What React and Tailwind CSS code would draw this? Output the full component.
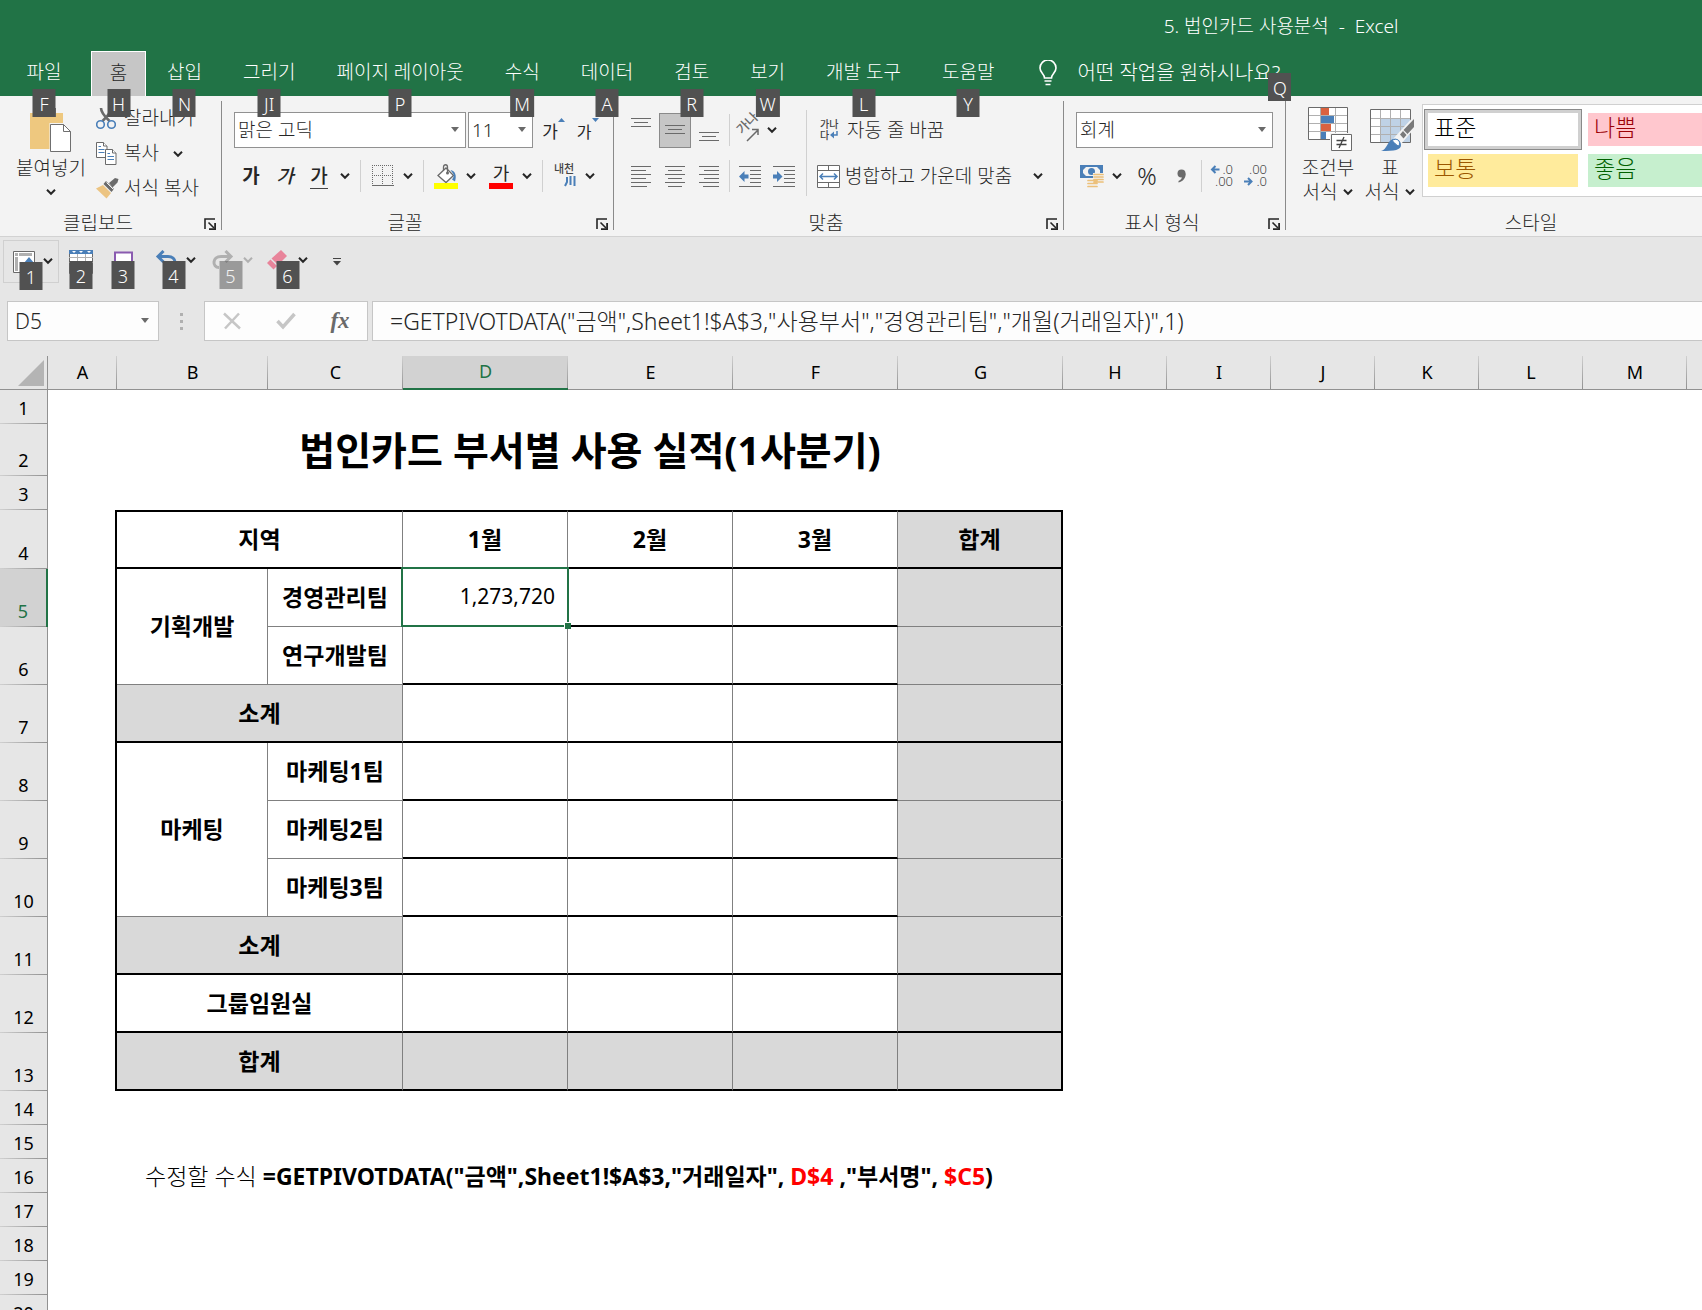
import { useState } from "react";
import clsx from "clsx";

// ── Data ───────────────────────────────────────────────────────────────────

const TABS = [
  { label: "홈", keyTip: "H", active: true },
  { label: "삽입", keyTip: "N" },
  { label: "그리기", keyTip: "JI" },
  { label: "페이지 레이아웃", keyTip: "P" },
  { label: "수식", keyTip: "M" },
  { label: "데이터", keyTip: "A" },
  { label: "검토", keyTip: "R" },
  { label: "보기", keyTip: "W" },
  { label: "개발 도구", keyTip: "L" },
  { label: "도움말", keyTip: "Y" },
];

const COLUMNS = [
  { name: "A", width: "w-[69px]" },
  { name: "B", width: "w-[151px]" },
  { name: "C", width: "w-[135px]" },
  { name: "D", width: "w-[165px]", active: true },
  { name: "E", width: "w-[165px]" },
  { name: "F", width: "w-[165px]" },
  { name: "G", width: "w-[165px]" },
  { name: "H", width: "w-[104px]" },
  { name: "I", width: "w-[104px]" },
  { name: "J", width: "w-[104px]" },
  { name: "K", width: "w-[104px]" },
  { name: "L", width: "w-[104px]" },
  { name: "M", width: "w-[104px]" },
];

// labels: cells to the left of the month columns; line: weight of the rule below
const REPORT_ROWS = [
  {
    row: 5,
    labels: [
      { text: "기획개발", rowSpan: 2, line: "thin" },
      { text: "경영관리팀", line: "thin" },
    ],
    values: ["1,273,720", "", ""],
    selected: 0,
    totalLine: "thin",
  },
  { row: 6, labels: [{ text: "연구개발팀", line: "thin" }], values: ["", "", ""], totalLine: "thin" },
  { row: 7, labels: [{ text: "소계", colSpan: 2, line: "thick", shaded: true }], values: ["", "", ""], totalLine: "thick" },
  {
    row: 8,
    labels: [
      { text: "마케팅", rowSpan: 3, line: "thin" },
      { text: "마케팅1팀", line: "thin" },
    ],
    values: ["", "", ""],
    totalLine: "thin",
  },
  { row: 9, labels: [{ text: "마케팅2팀", line: "thin" }], values: ["", "", ""], totalLine: "thin" },
  { row: 10, labels: [{ text: "마케팅3팀", line: "thin" }], values: ["", "", ""], totalLine: "thin" },
  { row: 11, labels: [{ text: "소계", colSpan: 2, line: "thick", shaded: true }], values: ["", "", ""], totalLine: "thick" },
  { row: 12, labels: [{ text: "그룹임원실", colSpan: 2, line: "thick" }], values: ["", "", ""], totalLine: "thick" },
  { row: 13, labels: [{ text: "합계", colSpan: 2, line: "thick", shaded: true }], values: ["", "", ""], shaded: true, totalLine: "thick" },
];

// ── Small parts ────────────────────────────────────────────────────────────

function KeyTip({ children, className }) {
  return (
    <span
      className={clsx(
        "absolute z-10 h-7 min-w-[23px] px-1 pt-0.5 flex items-center justify-center",
        "bg-[#515151] text-white text-[18px] leading-6",
        className
      )}
    >
      {children}
    </span>
  );
}

function Chevron({ className }) {
  return (
    <svg className={clsx("shrink-0", className)} width="10" height="8" viewBox="0 0 10 8" fill="none" stroke="currentColor" strokeWidth="2">
      <path d="M1 1.8 5 5.8 9 1.8" />
    </svg>
  );
}

function ChevronButton({ label }) {
  return (
    <button type="button" aria-label={label} className="w-[18px] h-8 flex items-center justify-center text-[#262626]">
      <Chevron />
    </button>
  );
}

function IconButton({ label, className, children }) {
  return (
    <button type="button" aria-label={label} className={clsx("shrink-0 h-8 flex items-center justify-center", className)}>
      {children}
    </button>
  );
}

function Separator({ className }) {
  return <div className={clsx("w-px bg-[#d0d0d0] shrink-0", className)} />;
}

function Dropdown({ label, value, className }) {
  return (
    <div className={clsx("relative shrink-0", className)}>
      <select
        aria-label={label}
        defaultValue={value}
        className="w-full h-9 appearance-none border border-[#919191] bg-white pl-[3px] text-[19px] text-[#262626]"
      >
        <option>{value}</option>
      </select>
      <svg className="absolute right-[7px] top-[15px] pointer-events-none" width="8" height="5" viewBox="0 0 8 5">
        <path d="M0 0h8L4 5z" fill="#6a6a6a" />
      </svg>
    </div>
  );
}

function Group({ title, launcher = true, className, children }) {
  return (
    <section aria-label={title} className={clsx("flex flex-col h-[140px]", className)}>
      <div className="flex-1">{children}</div>
      <div className="flex items-center h-[30px]">
        <div className="flex-1 pt-1 text-center leading-6">{title}</div>
        {launcher && (
          <button type="button" aria-label={`${title} 설정`} className="w-[25px] pl-2 pt-1.5">
            <svg width="12" height="12" viewBox="0 0 12 12" fill="none" stroke="#262626">
              <path d="M1 11V1h10" strokeWidth="1.6" />
              <path d="M4.5 4.5 10 10" strokeWidth="1.6" />
              <path d="M11.2 5v6.2H5" strokeWidth="2" />
            </svg>
          </button>
        )}
      </div>
    </section>
  );
}

function GroupDivider() {
  return <div className="w-px h-[129px] mt-[5px] bg-[#8a8a8a] shrink-0" />;
}

// ── Icons ──────────────────────────────────────────────────────────────────

function PasteIcon() {
  return (
    <svg width="42" height="48" viewBox="0 0 42 48">
      <path d="M0 9h33v36H0z" fill="#eec87f" />
      <path d="M8 4h18v9H8z" fill="#6f6f6f" />
      <path d="M19.5 19h15l7.5 7.5V48h-22.5z" fill="#f3f3f3" />
      <path d="M20.5 20.5h13l7 7v20h-20z" fill="#fff" stroke="#6f6f6f" />
      <path d="M33.5 20.5v7h7" fill="none" stroke="#6f6f6f" />
    </svg>
  );
}

function CutIcon() {
  return (
    <svg width="20" height="23" viewBox="0 0 20 23" fill="none">
      <path d="M5 1c0 4 2 7 8.5 13M15 1c0 4-2 7-8.5 13" stroke="#6a6a6a" strokeWidth="2.6" />
      <circle cx="4.5" cy="17.5" r="3.8" stroke="#4a7fb8" strokeWidth="1.6" />
      <circle cx="15.5" cy="17.5" r="3.8" stroke="#4a7fb8" strokeWidth="1.6" />
    </svg>
  );
}

function CopyIcon() {
  return (
    <svg width="21" height="23" viewBox="0 0 21 23" fill="#fff" stroke="#6a6a6a">
      <path d="M.5.5h7l3.5 3.5v11.5H.5z" />
      <path d="M7.5.5V4H11" />
      <path d="M2.5 4.5H5M2.5 7.5h6M2.5 10.5h6" stroke="#4a7fb8" />
      <path d="M9.5 7.5h7l3.5 3.5v11.5H9.5z" />
      <path d="M16.5 7.5V11H20" />
      <path d="M11.5 11.5H14M11.5 14.5h6.5M11.5 17.5h6.5" stroke="#4a7fb8" />
    </svg>
  );
}

function FormatPainterIcon() {
  return (
    <svg width="23" height="21" viewBox="0 0 23 21">
      <path d="M0 10.500 7 7l8 8-4.500 5.500z" fill="#ecc482" />
      <path d="m7.500 6 2.500-3 8 8-2.500 3z" fill="#6a6a6a" />
      <path d="m13 5 6-5 3.500 1-1 3.500-5 5z" fill="#6a6a6a" />
      <path d="m10.500 4.500 7 7" stroke="#f3f3f3" strokeWidth="1" />
    </svg>
  );
}

function BordersIcon() {
  return (
    <svg width="22" height="22" viewBox="0 0 22 22" fill="none" stroke="#6a6a6a">
      <path d="M0 .5h22M0 10.5h22M.5 0v20M10.5 0v20M20.5 0v20" strokeDasharray="1 1" />
      <path d="M0 20.5h22" />
    </svg>
  );
}

function FillIcon() {
  return (
    <svg width="24" height="25" viewBox="0 0 24 25" fill="none">
      <path d="M4 11.5 12 4l7.5 7.5-7.5 7z" fill="#fff" stroke="#6a6a6a" strokeWidth="1.3" />
      <path d="M9.5 6.5V3c0-3 4-3 4 0v6" stroke="#6a6a6a" strokeWidth="1.3" />
      <circle cx="13.5" cy="9" r="1.5" fill="#6a6a6a" />
      <path d="M16.5 6c4.500 1 6.500 5 4.500 11.500l-3-2c1.500-2 2.500-4 1-6z" fill="#4a7fb8" />
      <path d="M0 19h24v6H0z" fill="#ff0" />
    </svg>
  );
}

// each entry is one rule: [x, length], drawn top to bottom
function LinesIcon({ lines, gap = 4, top = 0, height = 21 }) {
  return (
    <svg width="20" height={height} viewBox={`0 0 20 ${height}`} stroke="#6a6a6a">
      {lines.map(([x, len], i) => (
        <path key={i} d={`M${x} ${top + i * gap + 0.5}h${len}`} />
      ))}
    </svg>
  );
}

const SHORT_LINES = [[0, 20], [3, 14], [0, 20]];
const LEFT_LINES = [[0, 20], [0, 15], [0, 20], [0, 15], [0, 20], [0, 16]];
const CENTER_LINES = [[0, 20], [3, 14], [0, 20], [3, 14], [0, 20], [3, 14]];
const RIGHT_LINES = [[0, 20], [5, 15], [0, 20], [5, 15], [0, 20], [4, 16]];

function IndentIcon({ flip }) {
  return (
    <svg width="23" height="21" viewBox="0 0 23 21" stroke="#6a6a6a">
      <path d="M0 .5h22M11 4.5h11M11 8.5h11M11 12.5h11M11 16.5h11M0 20.5h22" />
      <path
        d={flip ? "M9.500 10.500 4 5v3.500H0v4h4V16z" : "M0 10.500 5.500 5v3.500h4v4h-4V16z"}
        fill="#4a7fb8"
        stroke="none"
      />
    </svg>
  );
}

function OrientationIcon() {
  return (
    <svg className="overflow-visible" width="24" height="24" viewBox="0 0 24 24" fill="none" stroke="#6a6a6a">
      <text x="0" y="0" transform="translate(6 17) rotate(-45)" fontSize="13" fontWeight="500" fill="#6a6a6a" stroke="none">가나</text>
      <path d="m11 23 11-11M22 17v-5.500h-6" strokeWidth="1.500" />
    </svg>
  );
}

function WrapIcon() {
  return (
    <svg className="overflow-visible" width="19" height="20" viewBox="0 0 19 20">
      <text x="0" y="8" fontSize="10" fontWeight="500" fill="#444">가나</text>
      <text x="0" y="19" fontSize="10" fontWeight="500" fill="#444">다</text>
      <path d="M17 11v4h-5" fill="none" stroke="#4a7fb8" strokeWidth="1.500" />
      <path d="M14 11.500v7L10 15z" fill="#4a7fb8" />
    </svg>
  );
}

function MergeIcon() {
  return (
    <svg width="23" height="23" viewBox="0 0 23 23" fill="#fff" stroke="#6a6a6a">
      <path d="M.5.5h22v22H.5z" />
      <path d="M0 5.5h23M0 17.5h23M11.5 0v5.5M11.5 17.5V23" />
      <path d="M3 11.5h17M6 8.5l-3 3 3 3M17 8.5l3 3-3 3" fill="none" stroke="#4a7fb8" strokeWidth="1.5" />
    </svg>
  );
}

function MoneyIcon() {
  return (
    <svg width="24" height="23" viewBox="0 0 24 23">
      <path d="M0 0h23v13H0z" fill="#4a7fb8" />
      <path d="M3 2h17v9H3z" fill="#f3f3f3" />
      <path d="M3 2h3L3 5zM20 2h-3l3 3zM3 11V8l3 3z" fill="#4a7fb8" />
      <circle cx="11.5" cy="6.5" r="3.5" fill="#4a7fb8" />
      <path d="M13 8h11v11H13zM7 14h11v9H7z" fill="#f3f3f3" />
      <path d="M14 9.5h9M14 12h9M14 14.5h9M14 17h9M8 15.5h9M8 18.500h9M8 21.500h9" stroke="#ecc07a" strokeWidth="1.700" strokeLinecap="round" />
    </svg>
  );
}

function DecimalIcon({ increase }) {
  return (
    <svg className="overflow-visible" width="24" height="24" viewBox="0 0 24 24">
      <text x="23" y="10" fontSize="13" textAnchor="end" fill="#444">{increase ? ".0" : ".00"}</text>
      <text x="23" y="22" fontSize="13" textAnchor="end" fill="#444">{increase ? ".00" : ".0"}</text>
      <path
        d={increase ? "M9.500 5.500H2M5.500 2 2 5.500 5.500 9" : "M0 17.500h7.500M4 14l3.500 3.500L4 21"}
        fill="none"
        stroke="#4a7fb8"
        strokeWidth="2"
      />
    </svg>
  );
}

function ConditionalIcon() {
  return (
    <svg className="ml-1" width="45" height="45" viewBox="0 0 45 45">
      <path d="M.5.5h39v32H.5z" fill="#fff" />
      <path d="M13 1h8v7h-8zM13 17h10v7H13z" fill="#d9623f" />
      <path d="M13 9h13v7H13zM13 25h5v7h-5z" fill="#4a7fb8" />
      <path d="M1 8.5h38M1 16.5h38M1 24.5h38M12.5 1v31M27.5 1v31" stroke="#b0b0b0" />
      <path d="M.5.5h39v32H.5z" fill="none" stroke="#6a6a6a" />
      <path d="M22 26h23v19H22z" fill="#f3f3f3" />
      <path d="M23.5 27.5h20v16h-20z" fill="#fff" stroke="#6a6a6a" />
      <path d="M28.5 33.5h10M28.5 37.5h10M36 30l-5 11" fill="none" stroke="#444" strokeWidth="1.3" />
    </svg>
  );
}

function TableStyleIcon() {
  return (
    <svg className="ml-1" width="45" height="45" viewBox="0 0 45 45">
      <path d="M.5 2.5h40v33H.5z" fill="#fff" />
      <path d="M11 11h29v24H11z" fill="#bfd2e6" />
      <path d="M1 11.5h39M1 19.5h39M1 27.5h39M10.5 3v32M20.5 3v32M30.5 3v32" stroke="#b0b0b0" />
      <path d="M.5 2.5h40v33H.5z" fill="none" stroke="#6a6a6a" />
      <path d="M44 9v13L31 37l-8-5z" fill="#f3f3f3" />
      <path d="M44 12v8l-6.500 7-4-4zM36.500 28l-3 3.500-3.500-4 3-3.500z" fill="#7a7a7a" />
      <path d="M11 44c6-1 6-10 12-12 4-1 8 2 8 6 0 5-6 6-20 6z" fill="#4a7fb8" />
      <path d="M22 33.500c5-3 9 0 7 5.500-3-.500-4-3-7-5.500z" fill="#fff" stroke="#4a7fb8" />
    </svg>
  );
}

function PivotIcon() {
  return (
    <svg width="22" height="22" viewBox="0 0 22 22">
      <path d="M.5.5h21v21H.5z" fill="#fff" stroke="#6a6a6a" />
      <path d="M2 2h3v3H2zM6 2h13v3H6zM2 6h3v14H2z" fill="#b0b0b0" />
      <path d="m11 12 5-6 5 6h-3v8h-4v-8z" fill="#4a7fb8" />
    </svg>
  );
}

function SheetTableIcon() {
  return (
    <svg width="24" height="24" viewBox="0 0 24 24">
      <path d="M.5.5h23v23H.5z" fill="#fff" stroke="#6a6a6a" />
      <path d="M0 7.5h24M0 12.5h24M8.5 4v20M16.5 4v20" stroke="#b0b0b0" />
      <path d="M0 0h24v4H0z" fill="#4a7fb8" />
      <path d="M3 1h4L5 3zM10 1h4l-2 2zM18 1h4l-2 2z" fill="#fff" />
    </svg>
  );
}

function UndoIcon({ redo }) {
  return (
    <svg
      className={clsx(redo ? "-scale-x-100 text-[#b0b0b0]" : "text-[#4a7fb8]")}
      width="22"
      height="20"
      viewBox="0 0 22 20"
      fill="none"
      stroke="currentColor"
    >
      <path d="M3 6.500h10c9 0 9 11 2 11" strokeWidth="3" />
      <path d="M8.500 1 3 6.500 8.500 12" strokeWidth="3" />
    </svg>
  );
}

function EraserIcon() {
  return (
    <svg width="21" height="20" viewBox="0 0 21 20">
      <path d="M14 0l6 6-9 9-6.500-6.500z" fill="#e8849a" />
      <path d="m3.500 9.500 6.500 6.500-3.500 3.500L0 13z" fill="#e8849a" />
    </svg>
  );
}

// ── Title bar and tabs ─────────────────────────────────────────────────────

function TitleBar() {
  return (
    <header className="bg-[#217346] text-white text-[19px] font-light">
      <div className="h-[51px] pt-0.5 flex items-center justify-center pl-[860px] whitespace-pre">
        <h1>5. 법인카드 사용분석  -  Excel</h1>
      </div>
      <nav className="flex gap-px h-[45px] whitespace-nowrap">
        <button type="button" className="relative w-[88px] shrink-0 pb-0.5">
          파일
          <KeyTip className="left-1/2 -translate-x-1/2 top-[38px]">F</KeyTip>
        </button>
        {TABS.map((tab) => (
          <button
            key={tab.label}
            type="button"
            className={clsx(
              "relative shrink-0 pb-0.5",
              tab.active ? "ml-0.5 w-[55px] bg-[#c6c6c6] text-[#262626] border border-b-0 border-white" : "px-5"
            )}
          >
            {tab.label}
            <KeyTip className={clsx("left-1/2 -translate-x-1/2", tab.active ? "top-[37px]" : "top-[38px]")}>{tab.keyTip}</KeyTip>
          </button>
        ))}
        <button type="button" className="relative ml-6 flex shrink-0 items-center gap-5 pb-0.5 text-[20px]">
          <svg width="18" height="26" viewBox="0 0 18 26" fill="none" stroke="#fff" strokeWidth="1.6">
            <path d="M5.500 18c0-4-4.500-5-4.500-10a8 8 0 0 1 16 0c0 5-4.500 6-4.500 10z" />
            <path d="M5.500 21h7M6.500 24.500h5" />
          </svg>
          어떤 작업을 원하시나요?
          <KeyTip className="-right-[11px] top-[22px]">Q</KeyTip>
        </button>
      </nav>
    </header>
  );
}

// ── Ribbon ─────────────────────────────────────────────────────────────────

function ClipboardGroup() {
  return (
    <Group title="클립보드" className="w-[221px] shrink-0">
      <div className="flex pl-3">
        <button type="button" className="w-[78px] pt-2 flex flex-col items-center">
          <PasteIcon />
          <span className="leading-8">붙여넣기</span>
          <Chevron className="mt-1" />
        </button>
        <div className="pt-[5px] pl-1.5">
          <button type="button" className="flex items-center gap-1 h-[35px]">
            <span className="w-6"><CutIcon /></span>
            잘라내기
          </button>
          <button type="button" className="flex items-center gap-1 h-[35px]">
            <span className="w-6"><CopyIcon /></span>
            복사
            <Chevron className="ml-2.5" />
          </button>
          <button type="button" className="flex items-center gap-1 h-[35px]">
            <span className="w-6"><FormatPainterIcon /></span>
            서식 복사
          </button>
        </div>
      </div>
    </Group>
  );
}

function FontGroup() {
  return (
    <Group title="글꼴" className="w-[391px] shrink-0">
      <div className="pt-4 pl-3 flex flex-col gap-3">
        <div className="flex items-end">
          <Dropdown label="글꼴" value="맑은 고딕" className="w-[232px]" />
          <Dropdown label="글꼴 크기" value="11" className="ml-0.5 w-[65px]" />
          <IconButton label="글꼴 크기 크게" className="relative w-[34px]">
            <span className="text-[17px] font-normal">가</span>
            <svg className="absolute right-[2px] top-0.5" width="7" height="4"><path d="M0 4h7L3.500 0z" fill="#4a7fb8" /></svg>
          </IconButton>
          <IconButton label="글꼴 크기 작게" className="relative w-[34px]">
            <span className="text-[16px] font-normal">가</span>
            <svg className="absolute right-[2px] top-0.5" width="7" height="4"><path d="M0 0h7L3.500 4z" fill="#4a7fb8" /></svg>
          </IconButton>
        </div>
        <div className="flex items-center">
          <IconButton label="굵게" className="w-[34px] font-bold">가</IconButton>
          <IconButton label="기울임꼴" className="w-[34px] font-medium italic">가</IconButton>
          <IconButton label="밑줄" className="w-[34px]">
            <span className="border-b border-[#444] leading-6 font-medium">가</span>
          </IconButton>
          <ChevronButton label="밑줄 종류" />
          <Separator className="mx-1.5 h-8" />
          <IconButton label="테두리" className="w-8"><BordersIcon /></IconButton>
          <ChevronButton label="테두리 종류" />
          <Separator className="mx-1.5 h-8" />
          <IconButton label="채우기 색" className="w-8"><FillIcon /></IconButton>
          <ChevronButton label="채우기 색 선택" />
          <IconButton label="글꼴 색" className="ml-1 w-[34px]">
            <span className="w-6 border-b-6 border-[#f00] leading-5 text-[18px] font-normal">가</span>
          </IconButton>
          <ChevronButton label="글꼴 색 선택" />
          <Separator className="mx-1.5 h-8" />
          <IconButton label="윗주" className="w-8">
            <svg className="overflow-visible" width="22" height="24" viewBox="0 0 22 24">
              <text x="0" y="9" fontSize="11" fontWeight="500" fill="#444">내천</text>
              <path d="M13 13v5l-2 4M16.500 12v9M20.500 12v10" fill="none" stroke="#4a7fb8" strokeWidth="2" />
            </svg>
          </IconButton>
          <ChevronButton label="윗주 설정" />
        </div>
      </div>
    </Group>
  );
}

function AlignmentGroup() {
  return (
    <Group title="맞춤" className="w-[449px] shrink-0">
      <div className="flex pl-2.5">
        <div className="pt-4 flex flex-col gap-3">
          <div className="flex items-center h-9">
            <IconButton label="위쪽 맞춤" className="w-[34px]"><LinesIcon lines={SHORT_LINES} top={0} height={25} /></IconButton>
            <button type="button" aria-label="가운데 맞춤" className="w-8 mx-px h-[35px] flex items-center justify-center bg-[#c6c6c6] border border-[#8a8a8a]">
              <LinesIcon lines={SHORT_LINES} top={5} />
            </button>
            <IconButton label="아래쪽 맞춤" className="w-[34px]"><LinesIcon lines={SHORT_LINES} top={12} /></IconButton>
            <Separator className="mx-[3px] h-8" />
            <IconButton label="방향" className="w-[30px]"><OrientationIcon /></IconButton>
            <ChevronButton label="방향 선택" />
          </div>
          <div className="flex items-center">
            <IconButton label="왼쪽 맞춤" className="w-[34px]"><LinesIcon lines={LEFT_LINES} /></IconButton>
            <IconButton label="가운데 정렬" className="w-[34px]"><LinesIcon lines={CENTER_LINES} /></IconButton>
            <IconButton label="오른쪽 맞춤" className="w-[34px]"><LinesIcon lines={RIGHT_LINES} /></IconButton>
            <Separator className="mx-[3px] h-8" />
            <IconButton label="내어쓰기" className="w-[34px]"><IndentIcon /></IconButton>
            <IconButton label="들여쓰기" className="w-[34px]"><IndentIcon flip /></IconButton>
          </div>
        </div>
        <Separator className="ml-[5px] mt-3.5 h-[86px]" />
        <div className="flex-1 pt-4 pl-2.5 pr-4 flex flex-col gap-3">
          <button type="button" className="flex items-center gap-1.5 h-9">
            <span className="w-6 flex justify-center"><WrapIcon /></span>
            자동 줄 바꿈
          </button>
          <button type="button" className="flex items-center gap-1 h-8">
            <span className="w-6"><MergeIcon /></span>
            병합하고 가운데 맞춤
            <Chevron className="ml-auto mr-1" />
          </button>
        </div>
      </div>
    </Group>
  );
}

function NumberGroup() {
  return (
    <Group title="표시 형식" className="w-[221px] shrink-0">
      <div className="pt-4 pl-3 flex flex-col gap-3">
        <Dropdown label="표시 형식" value="회계" className="w-[197px]" />
        <div className="flex items-center">
          <IconButton label="회계 표시 형식" className="w-8"><MoneyIcon /></IconButton>
          <ChevronButton label="통화 선택" />
          <IconButton label="백분율 스타일" className="ml-1 w-[34px]"><span className="text-[24px]">%</span></IconButton>
          <IconButton label="쉼표 스타일" className="w-[34px]">
            <svg width="9" height="14" viewBox="0 0 9 14" fill="#6a6a6a">
              <circle cx="4.5" cy="4.5" r="4" />
              <path d="M8.500 4.500c.5 4.500-2.500 8-7 9v-1.500c2.500-1 4-3 3.500-6z" />
            </svg>
          </IconButton>
          <Separator className="mx-[3px] h-8" />
          <IconButton label="자릿수 늘림" className="w-[34px]"><DecimalIcon increase /></IconButton>
          <IconButton label="자릿수 줄임" className="w-[34px]"><DecimalIcon /></IconButton>
        </div>
      </div>
    </Group>
  );
}

function StyleCell({ label, className, selected }) {
  return (
    <button
      type="button"
      className={clsx("h-[41px] w-[158px] text-[23px]", selected ? "border border-[#8a8a8a] bg-[#d0d0d0] p-[3px]" : "p-1")}
    >
      <span className={clsx("block h-full pl-1.5 text-left leading-7", className)}>{label}</span>
    </button>
  );
}

function StylesGroup() {
  return (
    <div className="flex-1 overflow-hidden">
      <Group title="스타일" launcher={false} className="w-[490px]">
        <div className="flex pl-3">
          <button type="button" className="w-[60px] pt-[11px] flex flex-col items-center leading-6">
            <ConditionalIcon />
            <span className="mt-1">조건부</span>
            <span className="flex items-center gap-1.5">서식 <Chevron /></span>
          </button>
          <button type="button" className="ml-0.5 w-[60px] pt-[11px] flex flex-col items-center leading-6">
            <TableStyleIcon />
            <span className="mt-1">표</span>
            <span className="flex items-center gap-1.5">서식 <Chevron /></span>
          </button>
          <div className="ml-0.5 mt-2 h-[93px] shrink-0 grid grid-cols-[158px_158px] content-start gap-x-0.5 pl-px pt-1 pr-1 bg-white border border-[#d0d0d0]">
            <StyleCell label="표준" className="bg-white text-black" selected />
            <StyleCell label="나쁨" className="bg-[#ffc7ce] text-[#9c0006]" />
            <StyleCell label="보통" className="bg-[#ffeb9c] text-[#9c5700]" />
            <StyleCell label="좋음" className="bg-[#c6efce] text-[#006100]" />
          </div>
        </div>
      </Group>
    </div>
  );
}

function Ribbon() {
  return (
    <div className="flex h-[141px] overflow-hidden bg-[#f3f3f3] border-b border-[#d2d2d2] text-[19px] font-light text-[#262626] whitespace-nowrap">
      <ClipboardGroup />
      <GroupDivider />
      <FontGroup />
      <GroupDivider />
      <AlignmentGroup />
      <GroupDivider />
      <NumberGroup />
      <GroupDivider />
      <StylesGroup />
    </div>
  );
}

// ── Quick access bar ───────────────────────────────────────────────────────

function QuickButton({ label, keyTip, className, disabled, menu, children }) {
  return (
    <button type="button" aria-label={label} className={clsx("relative shrink-0 h-[43px] flex items-start pt-2.5", className)}>
      {children}
      {menu && <Chevron className={clsx("ml-auto mt-1.5", disabled ? "text-[#b0b0b0]" : "text-[#262626]")} />}
      <KeyTip className={clsx("left-1/2 -translate-x-1/2 top-[21px]", disabled && "opacity-50")}>{keyTip}</KeyTip>
    </button>
  );
}

function QuickAccess() {
  return (
    <div className="flex pt-[3px] pl-[3px] h-[54px] font-light">
      <QuickButton label="피벗 테이블" keyTip="1" menu className="w-14 border border-[#d0d0d0] pl-[9px] pr-[5px]">
        <PivotIcon />
      </QuickButton>
      <QuickButton label="표" keyTip="2" className="ml-2.5 w-6"><SheetTableIcon /></QuickButton>
      <QuickButton label="양식" keyTip="3" className="ml-[18px] w-6 justify-center">
        <svg width="19" height="22" viewBox="0 0 19 22">
          <path d="M1 2.500h17v19H1z" fill="#fff" stroke="#8a5bb0" strokeWidth="2" />
        </svg>
      </QuickButton>
      <QuickButton label="실행 취소" keyTip="4" menu className="ml-4 w-[45px] pl-1"><UndoIcon /></QuickButton>
      <QuickButton label="다시 실행" keyTip="5" menu disabled className="ml-3 w-[45px] pl-1"><UndoIcon redo /></QuickButton>
      <QuickButton label="지우기" keyTip="6" menu className="ml-3 w-[45px] pl-0.5 pr-0.5"><EraserIcon /></QuickButton>
      <button type="button" aria-label="빠른 실행 도구 모음 사용자 지정" className="ml-[18px] w-[18px] h-[43px] flex items-center justify-center">
        <svg width="8" height="8" viewBox="0 0 8 8">
          <path d="M0 .5h8" stroke="#444" />
          <path d="M0 3h8L4 7.500z" fill="#444" />
        </svg>
      </button>
    </div>
  );
}

// ── Formula bar ────────────────────────────────────────────────────────────

function FormulaBar() {
  const [formula, setFormula] = useState(
    '=GETPIVOTDATA("금액",Sheet1!$A$3,"사용부서","경영관리팀","개월(거래일자)",1)'
  );
  return (
    <div className="flex pt-2.5 pb-[15px] pl-[7px] font-light text-[#262626]">
      <div className="relative w-[152px] shrink-0">
        <input
          aria-label="이름 상자"
          defaultValue="D5"
          className="w-full h-10 border border-[#c6c6c6] bg-[#fdfdfd] pl-[7px] text-[21px]"
        />
        <svg className="absolute right-[10px] top-[17px]" width="8" height="5" viewBox="0 0 8 5">
          <path d="M0 0h8L4 5z" fill="#6a6a6a" />
        </svg>
      </div>
      <div className="w-[45px] shrink-0 flex flex-col items-center justify-center gap-1">
        <i className="size-[3px] bg-[#b0b0b0]" />
        <i className="size-[3px] bg-[#b0b0b0]" />
        <i className="size-[3px] bg-[#b0b0b0]" />
      </div>
      <div className="w-[164px] h-10 shrink-0 grid grid-cols-3 place-items-center border border-[#c6c6c6] bg-[#fdfdfd]">
        <button type="button" aria-label="취소">
          <svg width="18" height="18" viewBox="0 0 18 18" fill="none" stroke="#c6c6c6" strokeWidth="2.5"><path d="m1 1.500 16 15M16 1.500 2 16.500" /></svg>
        </button>
        <button type="button" aria-label="입력">
          <svg width="20" height="18" viewBox="0 0 20 18" fill="none" stroke="#c6c6c6" strokeWidth="3.5"><path d="m1.500 9 5.500 6L18.500 2" /></svg>
        </button>
        <button type="button" aria-label="함수 삽입" className="font-['Liberation_Serif',serif] italic font-bold text-[23px] leading-7 text-[#6a6a6a]">
          fx
        </button>
      </div>
      <input
        aria-label="수식 입력줄"
        value={formula}
        onChange={(e) => setFormula(e.target.value)}
        className="ml-1 flex-1 min-w-0 h-10 border border-r-0 border-[#c6c6c6] bg-[#fdfdfd] pl-[17px] pb-0.5 text-[23px]"
      />
    </div>
  );
}

// ── Sheet ──────────────────────────────────────────────────────────────────

function RowHeader({ n, active, tall }) {
  return (
    <th
      scope="row"
      className={clsx(
        "font-normal text-[18px] leading-8 align-bottom border-r",
        "bg-[length:100%_1px] bg-bottom bg-no-repeat bg-linear-to-r from-[#d0d0d0] to-[#919191]",
        tall ? tall : "h-[34px]",
        active ? "bg-[#d2d2d2] text-[#217346] border-r-2 border-[#217346]" : "bg-[#e6e6e6] border-[#919191]"
      )}
    >
      {n}
    </th>
  );
}

const LINE = {
  thin: "border-b border-b-[#808080]",
  thick: "border-b-2 border-b-black",
};

function ReportCell({ children, line, shaded, last, className, ...rest }) {
  return (
    <td
      className={clsx(
        "text-center",
        LINE[line],
        last ? "border-r-2 border-r-black" : "border-r border-r-[#808080]",
        shaded && "bg-[#d9d9d9]",
        className
      )}
      {...rest}
    >
      {children}
    </td>
  );
}

function ReportRow({ item }) {
  return (
    <tr>
      <RowHeader n={item.row} tall="h-[58px]" active={item.selected !== undefined} />
      <td className="border-r-2 border-black" />
      {item.labels.map((l) => (
        <ReportCell key={l.text} line={l.line} shaded={l.shaded} colSpan={l.colSpan} rowSpan={l.rowSpan} className="font-bold">
          {l.text}
        </ReportCell>
      ))}
      {item.values.map((v, i) => (
        <ReportCell key={i} line="thick" shaded={item.shaded} className="relative text-right! text-[21px] pr-3">
          {v}
          {item.selected === i && (
            <div className="absolute -inset-0.5 z-10 border-2 border-[#217346]">
              <div className="absolute -right-1 -bottom-1 size-[7px] border-l border-t border-white bg-[#217346]" />
            </div>
          )}
        </ReportCell>
      ))}
      <ReportCell line={item.totalLine} shaded last />
    </tr>
  );
}

function Sheet() {
  return (
    <main className="flex-1 min-h-0 overflow-hidden bg-white">
      <table className="w-full table-fixed border-separate border-spacing-0 text-[23px] text-black">
        <colgroup>
          <col className="w-12" />
          {COLUMNS.map((c) => <col key={c.name} className={c.width} />)}
          <col />
        </colgroup>
        <thead>
          <tr>
            <td className="h-[34px] bg-[#e6e6e6] border-r border-b border-[#919191]">
              <svg className="ml-auto mr-[3px]" width="26" height="26" viewBox="0 0 26 26"><path d="M26 0v26H0z" fill="#b4b4b4" /></svg>
            </td>
            {COLUMNS.map((c) => (
              <th
                key={c.name}
                scope="col"
                className={clsx(
                  "font-normal text-[18px] leading-7 pb-0.5",
                  "bg-[length:1px_100%] bg-right bg-no-repeat bg-linear-to-b from-[#d0d0d0] to-[#919191]",
                  c.active ? "bg-[#d2d2d2] text-[#217346] border-b-2 border-[#217346]" : "bg-[#e6e6e6] border-b border-[#919191]"
                )}
              >
                {c.name}
              </th>
            ))}
            <td className="bg-[#e6e6e6] border-b border-[#919191]" />
          </tr>
        </thead>
        <tbody>
          <tr><RowHeader n={1} /></tr>
          <tr>
            <RowHeader n={2} tall="h-[52px]" />
            <td />
            <td colSpan={6} className="text-center font-bold text-[39px] leading-[50px]">법인카드 부서별 사용 실적(1사분기)</td>
          </tr>
          <tr><RowHeader n={3} /></tr>
          <tr>
            <RowHeader n={4} tall="h-[59px]" />
            <td className="border-r-2 border-black" />
            <ReportCell line="thick" colSpan={2} className="font-bold border-t-2 border-t-black">지역</ReportCell>
            {["1월", "2월", "3월"].map((m) => (
              <ReportCell key={m} line="thick" className="font-bold border-t-2 border-t-black">{m}</ReportCell>
            ))}
            <ReportCell line="thick" shaded last className="font-bold border-t-2 border-t-black">합계</ReportCell>
          </tr>
          {REPORT_ROWS.map((item) => <ReportRow key={item.row} item={item} />)}
          <tr><RowHeader n={14} /></tr>
          <tr><RowHeader n={15} /></tr>
          <tr>
            <RowHeader n={16} />
            <td />
            <td colSpan={7} className="pl-7 leading-[30px] whitespace-nowrap">
              <span className="font-light">수정할 수식 </span>
              <b>
                =GETPIVOTDATA("금액",Sheet1!$A$3,"거래일자", <span className="text-[#f00]">D$4</span> ,"부서명",{" "}
                <span className="text-[#f00]">$C5</span>)
              </b>
            </td>
          </tr>
          {[17, 18, 19, 20].map((n) => <tr key={n}><RowHeader n={n} /></tr>)}
        </tbody>
      </table>
    </main>
  );
}

export default function App() {
  return (
    <div className="h-screen flex flex-col overflow-hidden bg-[#e6e6e6] font-['Noto_Sans','Noto_Sans_CJK_KR',sans-serif]">
      <TitleBar />
      <Ribbon />
      <QuickAccess />
      <FormulaBar />
      <Sheet />
    </div>
  );
}
